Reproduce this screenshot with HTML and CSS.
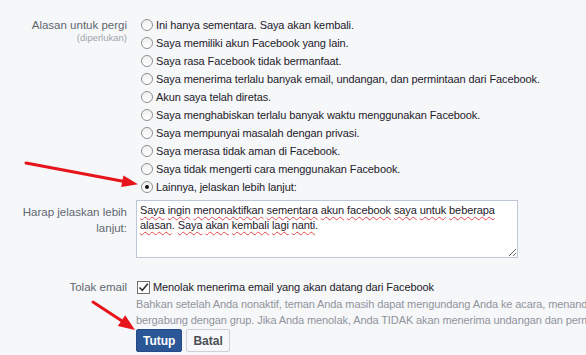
FILE: index.html
```html
<!DOCTYPE html>
<html lang="id">
<head>
    <meta charset="UTF-8">
    <meta name="viewport" content="width=device-width, initial-scale=1.0">
    <title>Nonaktifkan Akun</title>
    <link rel="stylesheet" href="styles.css">
</head>
<body>
    <div class="page">
        <form class="deactivate-form">
            <!-- Reason -->
            <div class="form-row">
                <div class="form-label">
                    Alasan untuk pergi
                    <span class="required">(diperlukan)</span>
                </div>
                <div class="form-field">
                    <label class="option"><span class="radio"></span>Ini hanya sementara. Saya akan kembali.</label>
                    <label class="option"><span class="radio"></span>Saya memiliki akun Facebook yang lain.</label>
                    <label class="option"><span class="radio"></span>Saya rasa Facebook tidak bermanfaat.</label>
                    <label class="option"><span class="radio"></span>Saya menerima terlalu banyak email, undangan, dan permintaan dari Facebook.</label>
                    <label class="option"><span class="radio"></span>Akun saya telah diretas.</label>
                    <label class="option"><span class="radio"></span>Saya menghabiskan terlalu banyak waktu menggunakan Facebook.</label>
                    <label class="option"><span class="radio"></span>Saya mempunyai masalah dengan privasi.</label>
                    <label class="option"><span class="radio"></span>Saya merasa tidak aman di Facebook.</label>
                    <label class="option"><span class="radio"></span>Saya tidak mengerti cara menggunakan Facebook.</label>
                    <label class="option"><span class="radio checked"></span>Lainnya, jelaskan lebih lanjut:</label>
                </div>
            </div>

            <!-- Explanation -->
            <div class="form-row explain-row">
                <div class="form-label explain-label">Harap jelaskan lebih lanjut:</div>
                <div class="form-field">
                    <div class="textarea" contenteditable="true" spellcheck="false"><span class="typo">Saya</span> <span class="typo">ingin</span> <span class="typo">menonaktifkan</span> <span class="typo">sementara</span> <span class="typo">akun</span> <span class="typo">facebook</span> <span class="typo">saya</span> <span class="typo">untuk</span> <span class="typo">beberapa</span> <span class="typo">alasan</span>. <span class="typo">Saya</span> <span class="typo">akan</span> <span class="typo">kembali</span> <span class="typo">lagi</span> <span class="typo">nanti</span>.</div>
                </div>
            </div>

            <!-- Email opt out -->
            <div class="form-row email-row">
                <div class="form-label">Tolak email</div>
                <div class="form-field">
                    <label class="option"><span class="checkbox">
                        <svg width="11" height="11" viewBox="0 0 11 11"><path d="M1.5 5.5 L4.3 8.3 L9.8 1.8" fill="none" stroke="#333" stroke-width="1.6"/></svg>
                    </span>Menolak menerima email yang akan datang dari Facebook</label>
                    <p class="hint">Bahkan setelah Anda nonaktif, teman Anda masih dapat mengundang Anda ke acara, menandai Anda di foto, atau meminta Anda<br>bergabung dengan grup. Jika Anda menolak, Anda TIDAK akan menerima undangan dan permintaan dari teman Anda ini.</p>
                </div>
            </div>

            <!-- Buttons -->
            <div class="form-row actions-row">
                <div class="form-label"></div>
                <div class="form-field actions">
                    <button type="button" class="btn btn-primary">Tutup</button>
                    <button type="button" class="btn">Batal</button>
                </div>
            </div>
        </form>

        <!-- Annotation arrows -->
        <svg class="arrows" width="586" height="355" viewBox="0 0 586 355">
            <line x1="26" y1="163" x2="123" y2="181.3" stroke="#e8141c" stroke-width="3" stroke-linecap="round"/>
            <polygon points="138,184.3 121.2,187 123.4,175.4" fill="#e8141c"/>
            <line x1="93" y1="302" x2="122" y2="321" stroke="#e8141c" stroke-width="3" stroke-linecap="round"/>
            <polygon points="135,330 117.8,326 125.2,315.2" fill="#e8141c"/>
        </svg>
    </div>
</body>
</html>
```

FILE: styles.css
```css
body {
    margin: 0;
    background: #f6f7f9;
    font-family: "Liberation Sans", Arial, sans-serif;
    font-size: 11px;
    letter-spacing: -0.1px;
    color: #1d2129;
    overflow: hidden;
}

.page {
    position: relative;
    width: 586px;
    height: 355px;
    overflow: hidden;
}

.deactivate-form {
    padding-top: 16px;
    width: 800px;
}

.form-row {
    display: grid;
    grid-template-columns: 127px 1fr;
    column-gap: 9px;
}

.form-label {
    text-align: right;
    color: #606770;
    font-size: 11.5px;
    letter-spacing: 0;
    line-height: 18px;
}

.required {
    display: block;
    font-size: 9.5px;
    line-height: 12px;
    color: #a0a4ab;
    margin-top: -2px;
}

.option {
    display: flex;
    align-items: center;
    height: 18px;
    white-space: nowrap;
}

.radio {
    width: 10px;
    height: 10px;
    margin: 0 3px 0 5px;
    border: 1px solid #8e8f8f;
    border-radius: 50%;
    background: linear-gradient(180deg, #f0f0f0 0%, #ffffff 100%);
    display: flex;
    align-items: center;
    justify-content: center;
    flex-shrink: 0;
}

.radio.checked::after {
    content: '';
    width: 4px;
    height: 4px;
    border-radius: 50%;
    background: #111;
}

/* explanation */
.explain-row {
    margin-top: 4px;
}

.explain-label {
    line-height: 16px;
    padding-top: 4px;
}

.textarea {
    width: 374px;
    height: 52px;
    padding: 2px 3px;
    border: 1px solid #bdc7d8;
    background: #fff;
    line-height: 15px;
    color: #1d2129;
    resize: both;
    overflow: auto;
    outline: none;
}

.typo {
    text-decoration: underline wavy #e0474c;
    text-decoration-thickness: 1px;
    text-underline-offset: 2px;
}

/* email opt out */
.email-row {
    margin-top: 20px;
}

.checkbox {
    width: 11px;
    height: 11px;
    margin: 0 3px 0 1px;
    border: 1px solid #707070;
    background: #fff;
    display: flex;
    flex-shrink: 0;
}

.hint {
    margin: 0;
    color: #90949c;
    line-height: 16px;
    white-space: nowrap;
}

/* buttons */
.actions-row {
    margin-top: 1px;
}

.actions {
    display: flex;
    gap: 4px;
}

.btn {
    height: 23px;
    padding: 0 6px;
    font-family: inherit;
    font-size: 12px;
    font-weight: bold;
    letter-spacing: 0;
    border: 1px solid #ced0d4;
    border-radius: 2px;
    background: #f6f7f9;
    color: #4b4f56;
    cursor: pointer;
}

.btn-primary {
    background: #2b5797;
    border-color: #244b85;
    color: #fff;
}

.arrows {
    position: absolute;
    left: 0;
    top: 0;
    pointer-events: none;
}
```
